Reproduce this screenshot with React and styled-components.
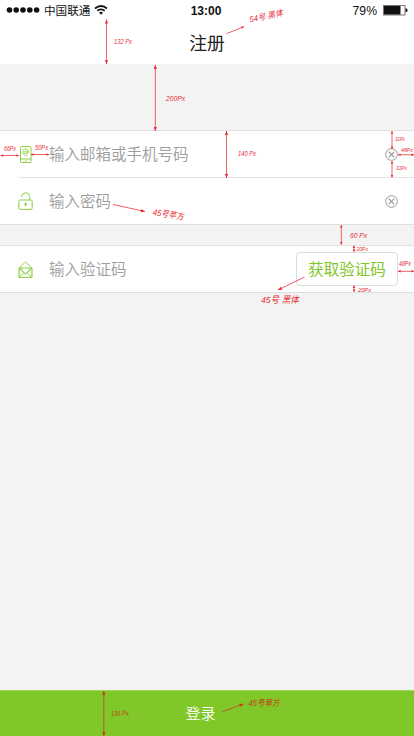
import React from 'react';
import styled, { createGlobalStyle } from 'styled-components';

const GlobalStyle = createGlobalStyle`
  * { box-sizing: border-box; }
  body { margin: 0; background: #f3f3f3; }
  input, button { font: inherit; }
`;

const Screen = styled.div`
  position: relative;
  display: flex;
  flex-direction: column;
  width: 414px;
  height: 736px;
  overflow: hidden;
  background: #f3f3f3;
  font-family: 'Noto Sans CJK SC', sans-serif;
`;

const Header = styled.header`
  height: 64px;
  flex: none;
  background: #fff;
`;

const StatusBar = styled.div`
  display: grid;
  grid-template-columns: 1fr auto 1fr;
  align-items: center;
  height: 20px;
  padding: 0 6px;
  color: #111;
`;

const StatusSide = styled.div`
  display: flex;
  align-items: center;
  justify-content: ${(p) => (p.$end ? 'flex-end' : 'flex-start')};
  gap: ${(p) => (p.$end ? 6 : 4)}px;
  height: 19px;
  margin-bottom: 1px;
`;

const Carrier = styled.span`
  font-size: 11.6px;
  line-height: 18px;
  white-space: nowrap;
  padding-bottom: 1px;
`;

const Clock = styled.span`
  font: bold 12px/20px 'Liberation Sans', sans-serif;
  padding-top: 1px;
  margin-right: 2px;
`;

const Percent = styled.span`
  font: 12.2px/20px 'Liberation Sans', sans-serif;
  padding-top: 2px;
`;

const Title = styled.h1`
  margin: 0;
  height: 44px;
  text-align: center;
  font-size: 17.8px;
  font-weight: 400;
  line-height: 44px;
  color: #222;
`;

const Group = styled.section`
  flex: none;
  margin-top: ${(p) => p.$gap}px;
  background: #fff;
  border-top: 1px solid #e2e2e2;
  border-bottom: 1px solid #dedede;
`;

const Field = styled.label`
  display: flex;
  align-items: center;
  height: 46px;
  padding: 0 16px 0 18px;
`;

const Divider = styled.div`
  height: 1px;
  margin-left: 19px;
  background: #e4e4e4;
`;

const Placeholder = styled.span`
  flex: 1;
  margin-left: 16px;
  padding-bottom: 2px;
  font-size: 15.5px;
  font-weight: 350;
  line-height: 24px;
  color: #9c9c9c;
`;

const ClearButton = styled.button`
  display: flex;
  padding: 0;
  border: 0;
  background: none;
`;

const CodeButton = styled.button`
  width: 102px;
  height: 34px;
  padding: 0 0 2px;
  border: 1px solid #dcdcdc;
  border-radius: 4px;
  background: #fff;
  color: #7dc626;
  font-size: 15.5px;
  line-height: 30px;
`;

const LoginButton = styled.button`
  flex: none;
  height: 46px;
  margin-top: auto;
  padding: 0 13px 3px 0;
  border: 0;
  border-top: 1px solid #a3d565;
  background: #80c729;
  color: #fff;
  font-size: 15px;
  font-weight: 350;
`;

const Overlay = styled.svg`
  position: absolute;
  inset: 0;
  pointer-events: none;
`;

const Note = styled.text`
  font-family: 'Liberation Sans', 'Noto Sans CJK SC', sans-serif;
  font-style: italic;
  fill: ${(p) => p.$color};
`;

const Signal = () => (
  <svg width="34" height="8" viewBox="0 0 34 8" fill="#111">
    {[3.5, 10.2, 17, 23.8, 30.6].map((x) => <circle key={x} cx={x} cy="4" r="2.8" />)}
  </svg>
);

const Wifi = () => (
  <svg width="14" height="10" viewBox="0 0 14 10" fill="none" stroke="#111" strokeWidth="1.8">
    <path d="M1 3.5Q7-1.4 13 3.5M3.3 5.8Q7 2.9 10.7 5.8" />
    <path d="M5 7.5Q7 6 9 7.5L7 9.7Z" fill="#111" stroke="none" />
  </svg>
);

const Battery = () => (
  <svg width="25" height="11" viewBox="0 0 25 11">
    <rect x=".5" y=".5" width="21.5" height="9.5" fill="#fff" stroke="#777" />
    <rect x="1" y="1" width="16.5" height="8.5" fill="#111" />
    <path d="M22.5 3.5h1q1 0 1 1.7t-1 1.7h-1z" fill="#111" />
  </svg>
);

const iconProps = { width: 15, height: 19, viewBox: '0 0 15 19', fill: 'none', stroke: '#8bcf3c' };

const Phone = () => (
  <svg {...iconProps}>
    <rect x="2.5" y="1.5" width="10.5" height="16" rx="1" />
    <path d="M2.5 14H13" />
    <path d="M7.8 15v1.5" />
    <circle cx="7.6" cy="7.3" r="1.4" strokeWidth=".8" />
    <path d="M9 5.8v2q.2 1 1.1.5 1.2-2.8-.8-4.1-2.6-1.2-4.3 1-1.1 3 1.1 4.7 1.8 1 3.3.1" strokeWidth=".8" />
  </svg>
);

const Lock = () => (
  <svg {...iconProps}>
    <rect x=".8" y="8" width="13.4" height="9.4" rx="1.5" />
    <path d="M3.7 4.8V4Q4.5.7 7.8.7T11.8 4.5V8" />
    <path d="M7.5 10.5v4M6 12.2h3" />
  </svg>
);

const Mail = () => (
  <svg {...iconProps}>
    <path d="M1 8L7.5 2 14 8V17.5H1ZM1 8H14M4 8L3 10.5 7.5 13.5 12 10.5 11 8M1 8L6 12.5M14 8L9 12.5M1 17.5L6 12.8Q7.5 14.8 9 12.8L14 17.5" strokeWidth=".9" />
    <path d="M1.2 9v8.3h12.6V9" strokeWidth=".6" />
  </svg>
);

const Clear = () => (
  <svg width="13" height="13" viewBox="0 0 13 13" fill="none" stroke="#999">
    <circle cx="6.5" cy="6.5" r="5.8" />
    <path d="M3.7 3.7L9.3 9.3M9.3 3.7L3.7 9.3" strokeWidth="1.2" />
  </svg>
);

const RED = '#e72b35';
const DARK = '#c63a18';

// Dimension lines: start point, end point, double-headed flag, colour
const ARROWS = [
  [106.5, 19.5, 106.5, 64, true],
  [155.3, 65, 155.3, 131, true],
  [226.5, 131, 226.5, 178, true],
  [341.3, 225, 341.3, 244.5, true],
  [392, 131, 392, 149, true],
  [392, 161, 392, 177.5, true],
  [398, 154.8, 414, 154.8, true],
  [398, 271.3, 414, 271.3, true],
  [354, 245.5, 354, 252, true],
  [354, 285.5, 354, 292, true],
  [0.5, 155.5, 19, 155.5, true],
  [31, 154.5, 49, 154.5, true],
  [226.5, 33.7, 244, 26.7, false],
  [113, 204.5, 145, 211.5, false],
  [304.5, 277, 278, 290, false],
  [103.8, 691, 103.8, 736, true, DARK],
  [222.5, 711.5, 243.5, 704, false, DARK],
];

// Handwritten labels: text, x, baseline, size, width, rotation, colour
const NOTES = [
  ['132 Px', 114, 43.5, 7, 18, 0],
  ['200Px', 166, 100.5, 7.5, 19, 0],
  ['140 Px', 238, 156, 7, 18, 0],
  ['60 Px', 350, 237.5, 8, 17, 0],
  ['66Px', 4, 150.5, 6.5, 12, 0],
  ['50Px', 35, 149.5, 6.5, 13, 0],
  ['31Px', 395, 140.5, 6, 10, 0],
  ['31Px', 396, 169.5, 6, 11, 0],
  ['48Px', 401, 152, 6, 12, 0],
  ['48Px', 399, 266, 6.5, 12, 0],
  ['20Px', 356.5, 251.3, 6, 11.5, 0],
  ['20Px', 358, 292, 6, 13, 0],
  ['54号 黑体', 250, 22.5, 8.3, 34, -12],
  ['45号苹方', 152.5, 215, 8.8, 31, 9],
  ['45号 黑体', 261, 303, 9.4, 38, 0],
  ['45号苹方', 248.5, 706, 8.7, 31, 0, DARK],
  ['136 Px', 111, 716, 7, 18, -2, DARK],
];

const Arrow = ({ line: [x1, y1, x2, y2, both, color = RED] }) => {
  const angle = (Math.atan2(y2 - y1, x2 - x1) * 180) / Math.PI;
  const head = Math.hypot(x2 - x1, y2 - y1) < 20 ? 'M0 0L-2.6-1.3V1.3Z' : 'M0 0L-4-1.6V1.6Z';
  return (
    <g stroke={color} fill={color} strokeWidth=".75">
      <path d={`M${x1} ${y1}L${x2} ${y2}`} />
      <path d={head} stroke="none" transform={`translate(${x2} ${y2}) rotate(${angle})`} />
      {both && <path d={head} stroke="none" transform={`translate(${x1} ${y1}) rotate(${angle + 180})`} />}
    </g>
  );
};

const Annotations = () => (
  <Overlay width="414" height="736" viewBox="0 0 414 736">
    {ARROWS.map((line, i) => <Arrow key={i} line={line} />)}
    {NOTES.map(([text, x, y, size, width, turn, color = RED], i) => (
      <Note
        key={i}
        $color={color}
        fontSize={size}
        x={x}
        y={y}
        textLength={width}
        lengthAdjust="spacingAndGlyphs"
        transform={`rotate(${turn} ${x} ${y})`}
      >
        {text}
      </Note>
    ))}
  </Overlay>
);

export default function App() {
  return (
    <Screen>
      <GlobalStyle />
      <Header>
        <StatusBar>
          <StatusSide>
            <Signal />
            <Carrier>中国联通</Carrier>
            <Wifi />
          </StatusSide>
          <Clock>13:00</Clock>
          <StatusSide $end>
            <Percent>79%</Percent>
            <Battery />
          </StatusSide>
        </StatusBar>
        <Title>注册</Title>
      </Header>
      <Group $gap={66}>
        <Field>
          <Phone />
          <Placeholder>输入邮箱或手机号码</Placeholder>
          <ClearButton aria-label="清除"><Clear /></ClearButton>
        </Field>
        <Divider />
        <Field>
          <Lock />
          <Placeholder>输入密码</Placeholder>
          <ClearButton aria-label="清除"><Clear /></ClearButton>
        </Field>
      </Group>
      <Group $gap={20}>
        <Field>
          <Mail />
          <Placeholder>输入验证码</Placeholder>
          <CodeButton>获取验证码</CodeButton>
        </Field>
      </Group>
      <LoginButton>登录</LoginButton>
      <Annotations />
    </Screen>
  );
}
